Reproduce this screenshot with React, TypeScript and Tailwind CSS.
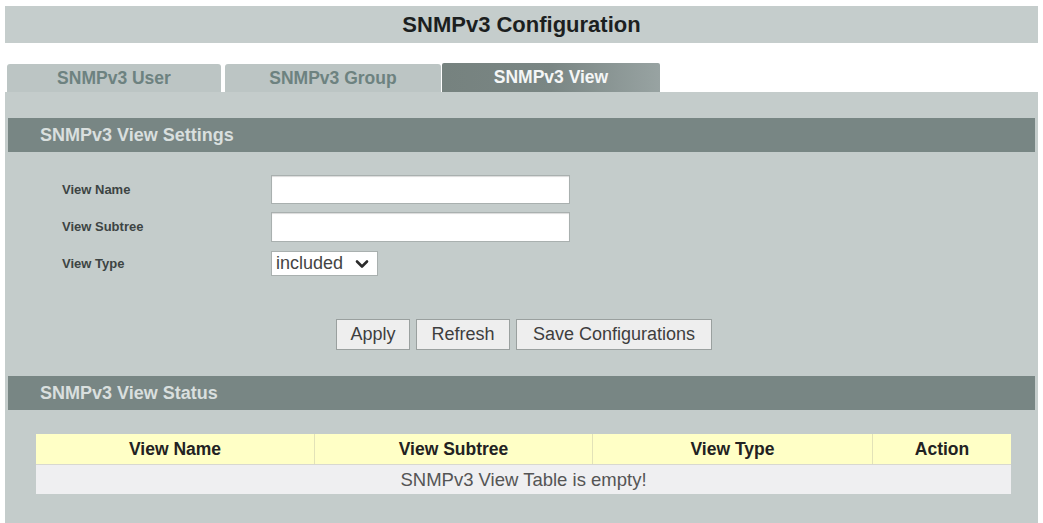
const font = { fontFamily: '"Liberation Sans", Arial, sans-serif' };

const SectionHeader = ({ title }: { title: string }) => (
  <div className="mx-[3px] flex h-[34px] items-center bg-[#788684] pl-[32px] text-[18px] font-bold text-[#d9dfde]">
    {title}
  </div>
);

const FormRow = ({ label, children }: { label: string; children: React.ReactNode }) => (
  <div className="flex items-center">
    <div className="w-[209px] text-[13px] font-bold text-[#3d4443]">{label}</div>
    {children}
  </div>
);

export default function App() {
  return (
    <div className="min-h-[523px] bg-white" style={font}>
      {/* Title bar */}
      <div className="mx-[5px] pt-[6px]">
        <div className="flex h-[37px] items-center justify-center bg-[#c5cdcc] text-[22px] font-bold text-[#1c1f1f]">
          SNMPv3 Configuration
        </div>
      </div>

      {/* Tabs */}
      <div className="mt-[20px] flex items-end pl-[7px]">
        <div className="flex h-[28px] w-[214px] items-center justify-center rounded-t-[3px] bg-[#bcc5c4] text-[17.5px] font-bold text-[#6d8280]">
          SNMPv3 User
        </div>
        <div className="ml-[4px] flex h-[28px] w-[216px] items-center justify-center rounded-t-[3px] bg-[#bcc5c4] text-[17.5px] font-bold text-[#6d8280]">
          SNMPv3 Group
        </div>
        <div className="ml-[1px] flex h-[29px] w-[218px] items-center justify-center rounded-t-[2px] bg-gradient-to-r from-[#76827f] via-[#7a8684] to-[#98a3a2] text-[17.5px] font-bold text-[#f4f6f6]">
          SNMPv3 View
        </div>
      </div>

      {/* Main panel */}
      <div className="mx-[5px] flex min-h-[431px] flex-col bg-[#c4cccb] pt-[26px]">
        <SectionHeader title="SNMPv3 View Settings" />

        <div className="mt-[23px] flex flex-col pl-[57px]">
          <FormRow label="View Name">
            <input className="h-[29px] w-[299px] border border-[#a9b0af] bg-white shadow-[inset_0_1px_1px_rgba(0,0,0,0.15)] outline-none" />
          </FormRow>
          <div className="mt-[8px]">
            <FormRow label="View Subtree">
              <input className="h-[30px] w-[299px] border border-[#a9b0af] bg-white shadow-[inset_0_1px_1px_rgba(0,0,0,0.15)] outline-none" />
            </FormRow>
          </div>
          <div className="mt-[9px]">
            <FormRow label="View Type">
              <div className="flex h-[25px] w-[107px] items-center justify-between border border-[#a9b0af] bg-white pl-[4px] pr-[8px] text-[18px] text-[#444]">
                <span>included</span>
                <svg width="14" height="10" viewBox="0 0 14 10">
                  <path d="M2 2.5 L7 7.5 L12 2.5" fill="none" stroke="#2b2b2b" strokeWidth="2.6" strokeLinecap="round" strokeLinejoin="round" />
                </svg>
              </div>
            </FormRow>
          </div>
        </div>

        <div className="mt-[43px] flex justify-center gap-[6px] pl-[5px]">
          <button className="h-[31px] w-[74px] border border-[#9aa09f] bg-[#eeeeee] text-[18px] text-[#3e3e3e]">Apply</button>
          <button className="h-[31px] w-[94px] border border-[#9aa09f] bg-[#eeeeee] text-[18px] text-[#3e3e3e]">Refresh</button>
          <button className="h-[31px] w-[196px] border border-[#9aa09f] bg-[#eeeeee] text-[18px] text-[#3e3e3e]">Save Configurations</button>
        </div>

        <div className="mt-[26px]">
          <SectionHeader title="SNMPv3 View Status" />
        </div>

        <div className="ml-[31px] mr-[27px] mt-[24px]">
          <div className="grid h-[30px] grid-cols-[279px_278px_280px_1fr] bg-[#ffffc6] text-[17.5px] font-bold text-[#222]">
            <div className="flex items-center justify-center border-r border-[#e2e2b8]">View Name</div>
            <div className="flex items-center justify-center border-r border-[#e2e2b8]">View Subtree</div>
            <div className="flex items-center justify-center border-r border-[#e2e2b8]">View Type</div>
            <div className="flex items-center justify-center">Action</div>
          </div>
          <div className="flex h-[30px] items-center justify-center border-t border-[#d8d8d0] bg-[#efeff1] text-[18.5px] text-[#555]">
            SNMPv3 View Table is empty!
          </div>
        </div>
      </div>
    </div>
  );
}
